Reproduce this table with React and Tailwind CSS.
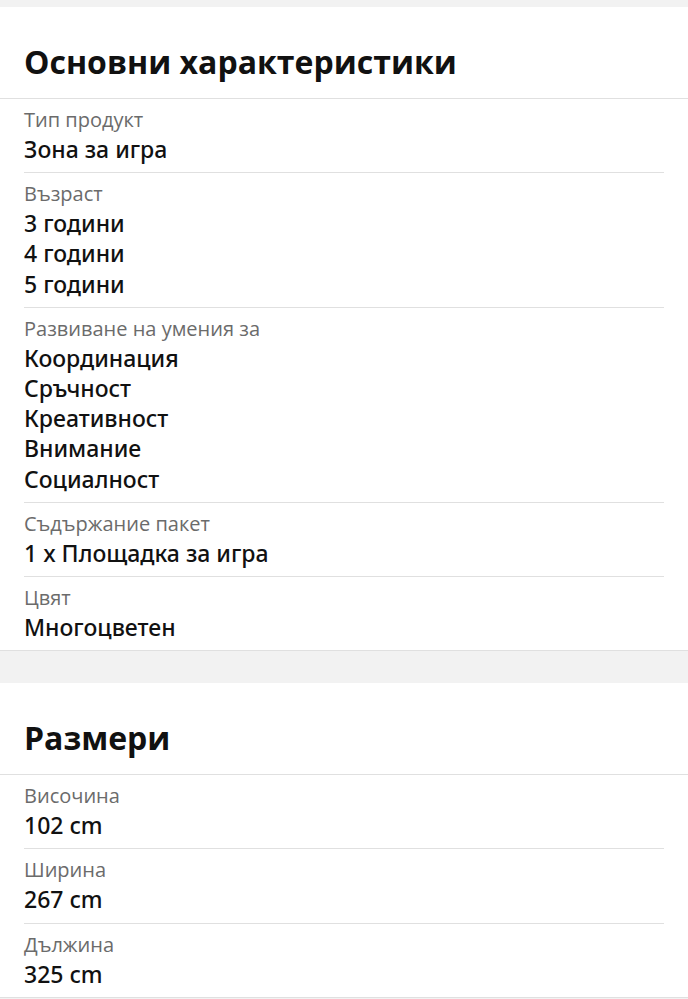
const sections = [
  {
    title: "Основни характеристики",
    items: [
      { label: "Тип продукт", values: ["Зона за игра"] },
      { label: "Възраст", values: ["3 години", "4 години", "5 години"] },
      {
        label: "Развиване на умения за",
        values: ["Координация", "Сръчност", "Креативност", "Внимание", "Социалност"],
      },
      { label: "Съдържание пакет", values: ["1 x Площадка за игра"] },
      { label: "Цвят", values: ["Многоцветен"] },
    ],
  },
  {
    title: "Размери",
    items: [
      { label: "Височина", values: ["102 cm"] },
      { label: "Ширина", values: ["267 cm"] },
      { label: "Дължина", values: ["325 cm"] },
    ],
  },
];

function Section({ title, items }) {
  return (
    <section className="bg-white border-b border-[#e0e0e0]">
      <h2 className="px-6 pt-[35px] pb-4 text-[32px] leading-[40px] font-bold text-[#111] border-b border-[#e0e0e0]">
        {title}
      </h2>
      <div className="px-6">
        {items.map((item, i) => (
          <div
            key={item.label}
            className={
              "pt-[7px] pb-2" + (i < items.length - 1 ? " border-b border-[#e0e0e0]" : "")
            }
          >
            <div className="text-[20px] leading-[28px] text-[#6b6b6b]">{item.label}</div>
            {item.values.map((v) => (
              <div
                key={v}
                className="font-['Noto_Sans',sans-serif] text-[23px] leading-[30.2px] font-medium text-[#111]"
              >
                {v}
              </div>
            ))}
          </div>
        ))}
      </div>
    </section>
  );
}

export default function App() {
  return (
    <div className="min-h-screen bg-[#f2f2f2] pt-[7px] font-['Open_Sans',sans-serif]">
      <div className="flex flex-col gap-8">
        {sections.map((s) => (
          <Section key={s.title} {...s} />
        ))}
      </div>
    </div>
  );
}
